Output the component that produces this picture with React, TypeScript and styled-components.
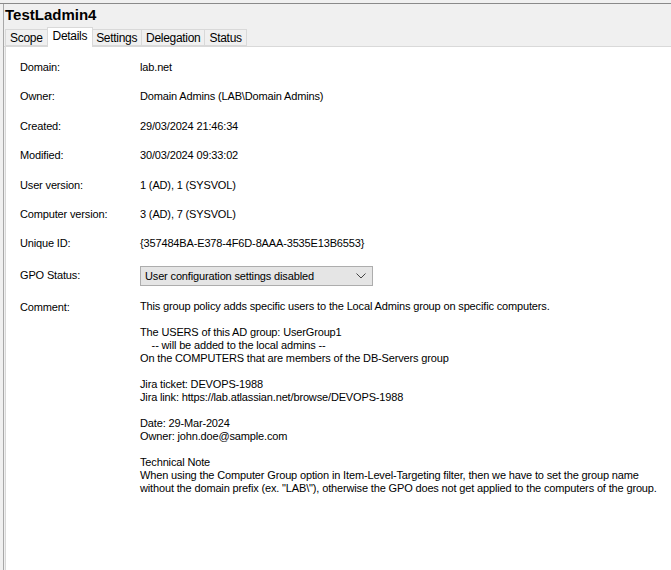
import React from 'react';
import styled, { createGlobalStyle } from 'styled-components';

const GlobalStyle = createGlobalStyle`
  html, body {
    margin: 0;
    padding: 0;
    background: #f0f0f0;
    font-family: "Liberation Sans", Arial, sans-serif;
    color: #000;
  }
`;

const Window = styled.div`
  width: 671px;
  height: 570px;
  display: flex;
  flex-direction: column;
  overflow: hidden;
  box-sizing: border-box;
  border-top: 3px solid #f0f0f0;
`;

const TopEdge = styled.div`
  height: 1px;
  background: #8a8a8a;
`;

const Body = styled.div`
  flex: 1;
  display: flex;
  flex-direction: column;
  border-left: 1px solid #a8a8a8;
  margin-left: 3px;
  min-height: 0;
`;

const Title = styled.div`
  font-weight: bold;
  font-size: 15px;
  line-height: 18px;
  padding: 2px 0 0 1px;
  height: 21px;
`;

const TabStrip = styled.div`
  display: flex;
  align-items: flex-end;
  height: 19px;
  border-bottom: 1px solid #d9d9d9;
`;

const Tab = styled.div<{ $active?: boolean }>`
  font-size: 12px;
  height: ${p => (p.$active ? 20 : 17)}px;
  line-height: ${p => (p.$active ? 17 : 16)}px;
  padding: 0 ${p => (p.$active ? 5 : 4)}px;
  margin: ${p => (p.$active ? '0 -1px -1px' : '0')};
  background: ${p => (p.$active ? '#fff' : '#f0f0f0')};
  border: 1px solid #d9d9d9;
  border-bottom: ${p => (p.$active ? 'none' : '1px solid #d9d9d9')};
  border-left: ${p => (p.$active ? '1px solid #d9d9d9' : 'none')};
  box-sizing: border-box;
  position: relative;
  z-index: ${p => (p.$active ? 1 : 0)};
  letter-spacing: -0.3px;
  &:first-child {
    border-left: 1px solid #d9d9d9;
    margin-left: 1px;
  }
`;

const Panel = styled.div`
  flex: 1;
  background: #fff;
  margin-left: 1px;
  border-left: 1px solid #d9d9d9;
  padding: 13px 0 0 14px;
  font-size: 11px;
  letter-spacing: -0.15px;
`;

const Grid = styled.div`
  display: grid;
  grid-template-columns: 120px 1fr;
  row-gap: 14.4px;
  align-items: center;
`;

const Label = styled.div<{ $top?: boolean }>`
  line-height: 15px;
  align-self: ${p => (p.$top ? 'start' : 'center')};
`;

const Value = styled.div`
  line-height: 15px;
`;

const Select = styled.div`
  width: 233px;
  height: 20px;
  box-sizing: border-box;
  background: #e5e5e5;
  border: 1px solid #adadad;
  display: flex;
  align-items: center;
  justify-content: space-between;
  padding: 0 6px 0 4px;
  line-height: 18px;
`;

const Comment = styled.div`
  line-height: 13px;
  white-space: pre;
  margin-top: 0;
`;

const rows: [string, string][] = [
  ['Domain:', 'lab.net'],
  ['Owner:', 'Domain Admins (LAB\\Domain Admins)'],
  ['Created:', '29/03/2024 21:46:34'],
  ['Modified:', '30/03/2024 09:33:02'],
  ['User version:', '1 (AD), 1 (SYSVOL)'],
  ['Computer version:', '3 (AD), 7 (SYSVOL)'],
  ['Unique ID:', '{357484BA-E378-4F6D-8AAA-3535E13B6553}'],
];

const commentText = [
  'This group policy adds specific users to the Local Admins group on specific computers.',
  '',
  'The USERS of this AD group: UserGroup1',
  '    -- will be added to the local admins --',
  'On the COMPUTERS that are members of the DB-Servers group',
  '',
  'Jira ticket: DEVOPS-1988',
  'Jira link: https://lab.atlassian.net/browse/DEVOPS-1988',
  '',
  'Date: 29-Mar-2024',
  'Owner: john.doe@sample.com',
  '',
  'Technical Note',
  'When using the Computer Group option in Item-Level-Targeting filter, then we have to set the group name',
  'without the domain prefix (ex. "LAB\\"), otherwise the GPO does not get applied to the computers of the group.',
].join('\n');

const tabs = ['Scope', 'Details', 'Settings', 'Delegation', 'Status'];

export default function App() {
  return (
    <>
      <GlobalStyle />
      <Window>
        <TopEdge />
        <Body>
          <Title>TestLadmin4</Title>
          <TabStrip>
            {tabs.map(t => (
              <Tab key={t} $active={t === 'Details'}>{t}</Tab>
            ))}
          </TabStrip>
          <Panel>
            <Grid>
              {rows.map(([l, v]) => (
                <React.Fragment key={l}>
                  <Label>{l}</Label>
                  <Value>{v}</Value>
                </React.Fragment>
              ))}
              <Label>GPO Status:</Label>
              <Select>
                <span>User configuration settings disabled</span>
                <svg width="10" height="6" viewBox="0 0 10 6">
                  <path d="M0.5 0.5 L5 5 L9.5 0.5" fill="none" stroke="#444" strokeWidth="1" />
                </svg>
              </Select>
              <Label $top>Comment:</Label>
              <Comment>{commentText}</Comment>
            </Grid>
          </Panel>
        </Body>
      </Window>
    </>
  );
}
